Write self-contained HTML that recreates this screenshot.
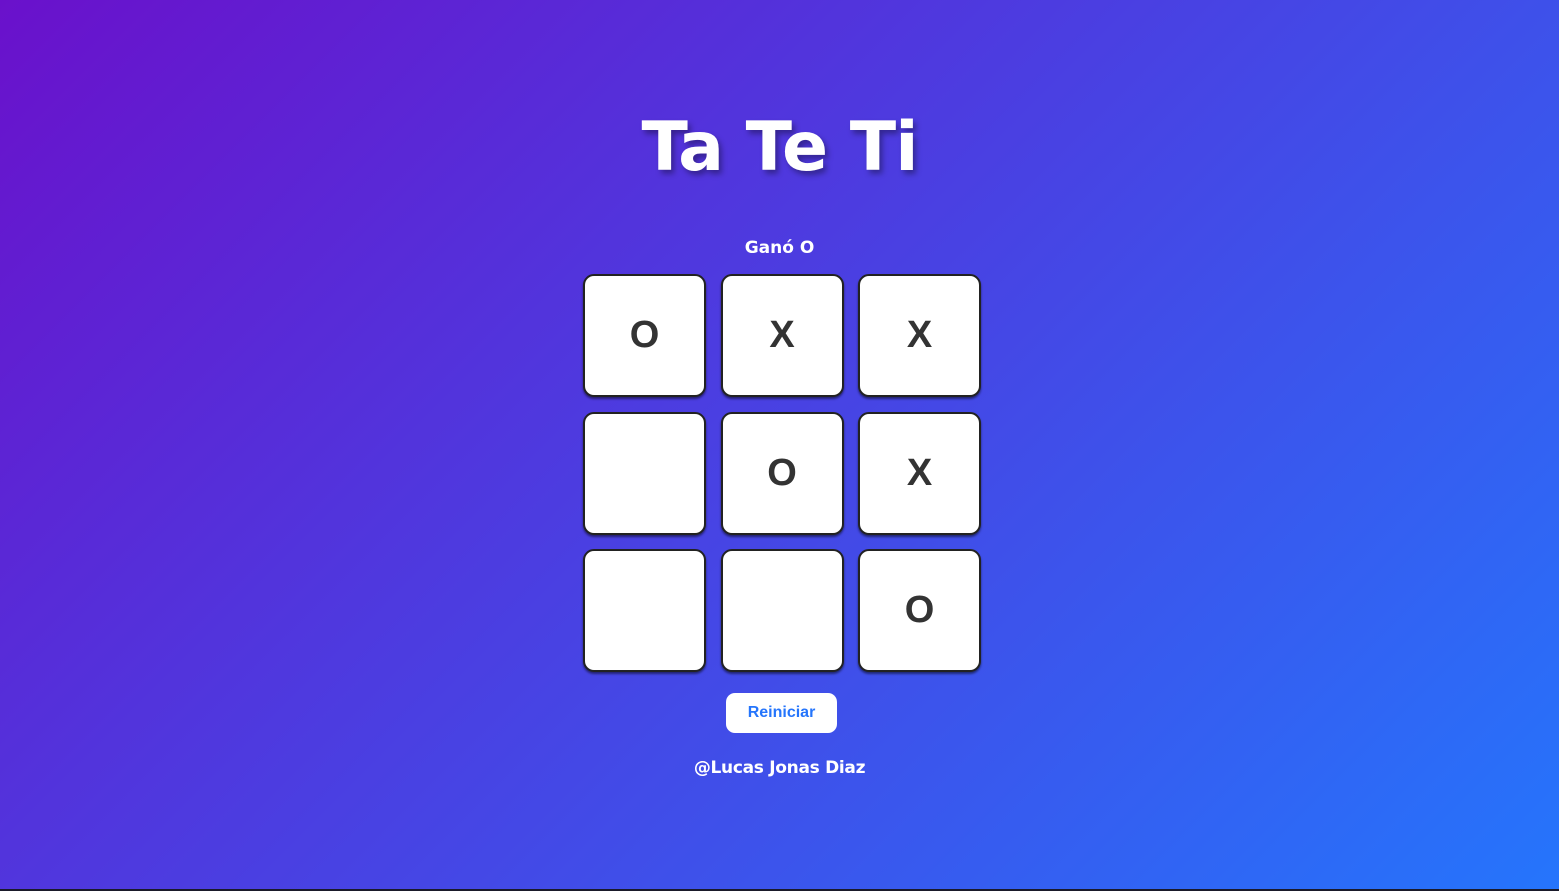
<!DOCTYPE html>
<html><head><meta charset="utf-8"><style>
html,body{margin:0;height:891px;width:1559px;overflow:hidden}
body{background:linear-gradient(135deg,#6a11cb 0%,#2575fc 100%);font-family:"DejaVu Sans","Liberation Sans",sans-serif;color:#fff;position:relative}
h1{position:absolute;top:98px;left:0;width:1559px;margin:0;text-align:center;font-size:68px;font-weight:bold;letter-spacing:-1px;text-shadow:3px 4px 6px rgba(0,0,0,.35);line-height:100px}
.st{position:absolute;top:238px;left:0;width:1559px;text-align:center;font-size:17px;font-weight:bold}
.grid{position:absolute;left:583px;top:274px;display:grid;grid-template-columns:repeat(3,123px);grid-template-rows:repeat(3,123px);gap:14.5px 14.5px}
.c{background:#fff;border:2px solid #222;border-radius:11px;box-sizing:border-box;display:flex;align-items:center;justify-content:center;font-family:"Liberation Sans",sans-serif;font-weight:bold;font-size:38px;color:#333;box-shadow:0 2px 2px rgba(0,0,0,.5)}
.btn{position:absolute;left:726px;top:693px;width:111px;height:40px;background:#fff;border-radius:9px;color:#2575fc;font-family:"Liberation Sans",sans-serif;font-weight:bold;font-size:16px;display:flex;align-items:center;justify-content:center}
.ft{position:absolute;top:758px;left:0;width:1559px;text-align:center;font-size:17px;font-weight:bold;letter-spacing:-0.3px}
.bar{position:absolute;bottom:0;left:0;width:1559px;height:2px;background:#1a1a2a}
</style></head><body>
<h1>Ta Te Ti</h1>
<div class="st">Ganó O</div>
<div class="grid">
<div class="c">O</div><div class="c">X</div><div class="c">X</div>
<div class="c"></div><div class="c">O</div><div class="c">X</div>
<div class="c"></div><div class="c"></div><div class="c">O</div>
</div>
<div class="btn">Reiniciar</div>
<div class="ft">@Lucas Jonas Diaz</div>
<div class="bar"></div>
</body></html>
